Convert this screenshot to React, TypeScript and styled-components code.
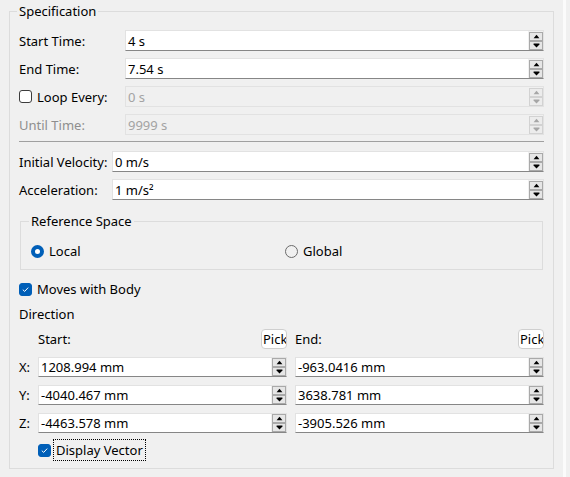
import React from 'react';
import styled, { createGlobalStyle } from 'styled-components';

const GlobalStyle = createGlobalStyle`
    body {
        margin: 0;
        background: #f0f0f0;
        font-family: "Segoe UI", "Noto Sans", "Liberation Sans", sans-serif;
        font-size: 13px;
        color: #000;
    }
`

interface Ispin {
    value: string;
    off?: boolean;
    h?: number;
}

interface Icheck {
    on: boolean;
    label: string;
    focus?: boolean;
}

const Arrow = ({ up, off }: { up: boolean; off?: boolean }) => (
    <svg width="7" height="5" viewBox="0 0 7 5">
        {up
            ? <path d="M3.5 0.8 L6.4 4.2 L0.6 4.2 Z" fill={off ? '#a6a6a6' : '#000'} />
            : <path d="M0.6 0.6 H6.4 V1.4 L3.5 4.4 L0.6 1.4 Z" fill={off ? '#a6a6a6' : '#000'} />}
    </svg>
)

const SpinBox = ({ value, off, h = 21 }: Ispin) => (
    <StSpin $off={off} $h={h}>
        <StField $off={off}>{value}</StField>
        <StSteps>
            <StStep $off={off}><Arrow up off={off} /></StStep>
            <StStep $off={off}><Arrow up={false} off={off} /></StStep>
        </StSteps>
    </StSpin>
)

const Check = ({ on, label, focus }: Icheck) => (
    <StCheckRow>
        <StBox $on={on}>
            {on && (
                <svg width="9" height="9" viewBox="0 0 9 9">
                    <path d="M1.8 4.7 L3.7 6.4 L7.2 2.6" stroke="#fff" strokeWidth="1" fill="none" />
                </svg>
            )}
        </StBox>
        <StCheckText $focus={focus}>{label}</StCheckText>
    </StCheckRow>
)

const Radio = ({ on, label }: { on: boolean; label: string }) => (
    <StCheckRow>
        <StRound $on={on} />
        <span>{label}</span>
    </StCheckRow>
)

const App = () => {
    return (
        <StPage>
            <GlobalStyle />
            <StPanel>
                <StGroup>
                    <StLegend>Specification</StLegend>
                    <StForm $col={106}>
                        <span>Start Time:</span>
                        <SpinBox value="4 s" />
                        <span>End Time:</span>
                        <SpinBox value="7.54 s" />
                        <Check on={false} label="Loop Every:" />
                        <SpinBox value="0 s" off />
                        <StDim>Until Time:</StDim>
                        <SpinBox value="9999 s" off />
                    </StForm>
                    <StLine />
                    <StForm $col={93}>
                        <span>Initial Velocity:</span>
                        <SpinBox value="0 m/s" />
                        <span>Acceleration:</span>
                        <SpinBox value="1 m/s²" />
                    </StForm>
                    <StSubGroup>
                        <StSubLegend>Reference Space</StSubLegend>
                        <StRadios>
                            <Radio on label="Local" />
                            <Radio on={false} label="Global" />
                        </StRadios>
                    </StSubGroup>
                    <StMoves>
                        <Check on label="Moves with Body" />
                    </StMoves>
                    <StHeading>Direction</StHeading>
                    <StVectors>
                        <span />
                        <StHead>
                            <span>Start:</span>
                            <StPick>Pick</StPick>
                        </StHead>
                        <StHead>
                            <span>End:</span>
                            <StPick>Pick</StPick>
                        </StHead>
                        <span>X:</span>
                        <SpinBox value="1208.994 mm" h={20} />
                        <SpinBox value="-963.0416 mm" h={20} />
                        <span>Y:</span>
                        <SpinBox value="-4040.467 mm" h={20} />
                        <SpinBox value="3638.781 mm" h={20} />
                        <span>Z:</span>
                        <SpinBox value="-4463.578 mm" h={20} />
                        <SpinBox value="-3905.526 mm" h={20} />
                    </StVectors>
                    <StDisplay>
                        <Check on label="Display Vector" focus />
                    </StDisplay>
                </StGroup>
            </StPanel>
            <StStrip />
        </StPage>
    );
};

const StPage = styled.div`
    display: flex;
    height: 477px;
    overflow: hidden;
`

const StPanel = styled.div`
    width: 563px;
    box-sizing: border-box;
    padding: 3px 0 0 9px;
`

const StStrip = styled.div`
    width: 3px;
    background: #fbfbfb;
`

const StGroup = styled.fieldset`
    margin: 0;
    width: 545px;
    box-sizing: border-box;
    border: 1px solid #dcdcdc;
    padding: 11px 9px 7px 9px;
    min-width: 0;
`

const StLegend = styled.legend`
    padding: 0 2px;
    margin-left: -2px;
    line-height: 16px;
`

const StForm = styled.div<{ $col: number }>`
    display: grid;
    grid-template-columns: ${props => props.$col}px 1fr;
    grid-auto-rows: 21px;
    row-gap: 7px;
    align-items: center;
`

const StDim = styled.span`
    color: #8e8e8e;
`

const StLine = styled.div`
    height: 1px;
    background: #a0a0a0;
    margin: 6px 0 9px;
`

const StSpin = styled.div<{ $off?: boolean; $h: number }>`
    display: flex;
    align-items: center;
    height: ${props => props.$h}px;
    box-sizing: border-box;
    border: 1px solid #e2e2e2;
    border-bottom-color: ${props => props.$off ? '#e2e2e2' : '#868686'};
`

const StField = styled.div<{ $off?: boolean }>`
    flex: 1;
    align-self: stretch;
    display: flex;
    align-items: center;
    padding-left: 2px;
    background: ${props => props.$off ? 'transparent' : '#fff'};
    color: ${props => props.$off ? '#a3a3a3' : '#000'};
    white-space: nowrap;
    overflow: hidden;
`

const StSteps = styled.div`
    width: 14px;
    margin-left: 1px;
    display: flex;
    flex-direction: column;
`

const StStep = styled.div<{ $off?: boolean }>`
    height: 9px;
    box-sizing: border-box;
    border: 1px solid ${props => props.$off ? '#d2d2d2' : '#a9a9a9'};
    background: ${props => props.$off ? '#ececec' : '#e6e6e6'};
    display: flex;
    align-items: center;
    justify-content: center;
`

const StCheckRow = styled.label`
    display: inline-flex;
    align-items: center;
    gap: 5px;
    line-height: 16px;
`

const StBox = styled.span<{ $on: boolean }>`
    width: 13px;
    height: 13px;
    box-sizing: border-box;
    border-radius: 3px;
    border: 1px solid ${props => props.$on ? '#005fb8' : '#3c3c3c'};
    background: ${props => props.$on ? '#005fb8' : '#fff'};
    display: inline-flex;
    align-items: center;
    justify-content: center;
`

const StCheckText = styled.span<{ $focus?: boolean }>`
    padding: ${props => props.$focus ? '2px 2px' : '0'};
    margin-left: ${props => props.$focus ? '-3px' : '0'};
    border: ${props => props.$focus ? '1px dotted #000' : 'none'};
`

const StRound = styled.span<{ $on: boolean }>`
    width: 13px;
    height: 13px;
    box-sizing: border-box;
    border-radius: 50%;
    border: ${props => props.$on ? '4px solid #005fb8' : '1px solid #6b6b6b'};
    background: ${props => props.$on ? '#fff' : 'transparent'};
`

const StSubGroup = styled.fieldset`
    margin: 13px 1px 0 1px;
    border: 1px solid #dcdcdc;
    padding: 14px 3px 10px 10px;
    min-width: 0;
`

const StSubLegend = styled.legend`
    padding: 0 2px;
    margin-left: -2px;
    line-height: 16px;
`

const StRadios = styled.div`
    display: grid;
    grid-template-columns: 1fr 1fr;
    height: 16px;
    align-items: center;
`

const StMoves = styled.div`
    margin-top: 11px;
    height: 16px;
    display: flex;
    align-items: center;
`

const StHeading = styled.div`
    margin-top: 9px;
    line-height: 16px;
`

const StVectors = styled.div`
    margin-top: 7px;
    display: grid;
    grid-template-columns: 11px 1fr 1fr;
    column-gap: 8px;
    grid-auto-rows: 20px;
    row-gap: 8px;
    align-items: center;
`

const StHead = styled.div`
    display: flex;
    justify-content: space-between;
    align-items: center;
`

const StPick = styled.button`
    width: 26px;
    height: 20px;
    padding: 0 0 0 1px;
    box-sizing: border-box;
    border: 1px solid #cfcfcf;
    border-radius: 4px;
    background: #fff;
    font: inherit;
    color: #000;
    text-align: left;
    white-space: nowrap;
    overflow: hidden;
`

const StDisplay = styled.div`
    margin-top: 6px;
    padding-left: 19px;
    height: 22px;
    display: flex;
    align-items: center;
`

export default App;
